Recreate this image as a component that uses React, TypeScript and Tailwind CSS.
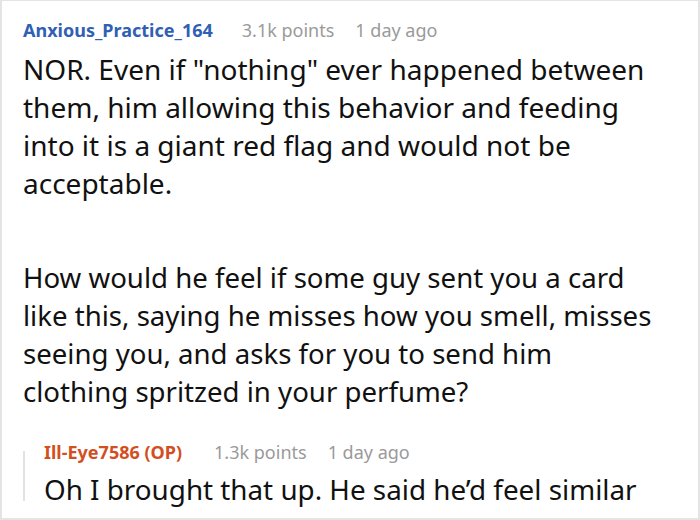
import React from 'react'

const font = { fontFamily: '"Noto Sans", "Open Sans", sans-serif' }

function Meta({ points, age }: { points: string; age: string }) {
  return (
    <>
      <span className="ml-[29px] text-[18px] font-normal text-[#9a9a9a]">{points}</span>
      <span className="ml-[21px] text-[18px] font-normal text-[#9a9a9a]">{age}</span>
    </>
  )
}

export default function App(): React.JSX.Element {
  return (
    <div
      className="h-[520px] w-[700px] overflow-hidden border-2 border-t border-[#e4e4e4] bg-white pl-[21px] pt-[17px]"
      style={font}
    >
      <div className="flex h-6 items-center whitespace-nowrap leading-6">
        <span className="text-[18px] font-bold text-[#3060b4]">Anxious_Practice_164</span>
        <Meta points="3.1k points" age="1 day ago" />
      </div>

      <p className="mt-2 whitespace-nowrap text-[28px] leading-[38px] text-[#111]">
        NOR. Even if "nothing" ever happened between
        <br />
        them, him allowing this behavior and feeding
        <br />
        into it is a giant red flag and would not be
        <br />
        acceptable.
      </p>

      <p className="mt-[56px] whitespace-nowrap text-[27.6px] leading-[38px] text-[#111]">
        How would he feel if some guy sent you a card
        <br />
        like this, saying he misses how you smell, misses
        <br />
        seeing you, and asks for you to send him
        <br />
        clothing spritzed in your perfume?
      </p>

      <div className="mt-[30px] flex">
        <div className="mt-[11px] h-[50px] w-[2px] shrink-0 bg-[#e2e2e2]" />
        <div className="pl-[19px]">
          <div className="flex h-6 items-center whitespace-nowrap leading-6">
            <span className="text-[18px] font-bold text-[#d24f1f]">Ill-Eye7586 (OP)</span>
            <span className="ml-[32px] text-[18px] font-normal text-[#9a9a9a]">1.3k points</span>
            <span className="ml-[21px] text-[18px] font-normal text-[#9a9a9a]">1 day ago</span>
          </div>
          <p className="mt-[6px] whitespace-nowrap text-[27.8px] leading-[38px] text-[#111]">
            Oh I brought that up. He said he’d feel similar
          </p>
        </div>
      </div>
    </div>
  )
}
